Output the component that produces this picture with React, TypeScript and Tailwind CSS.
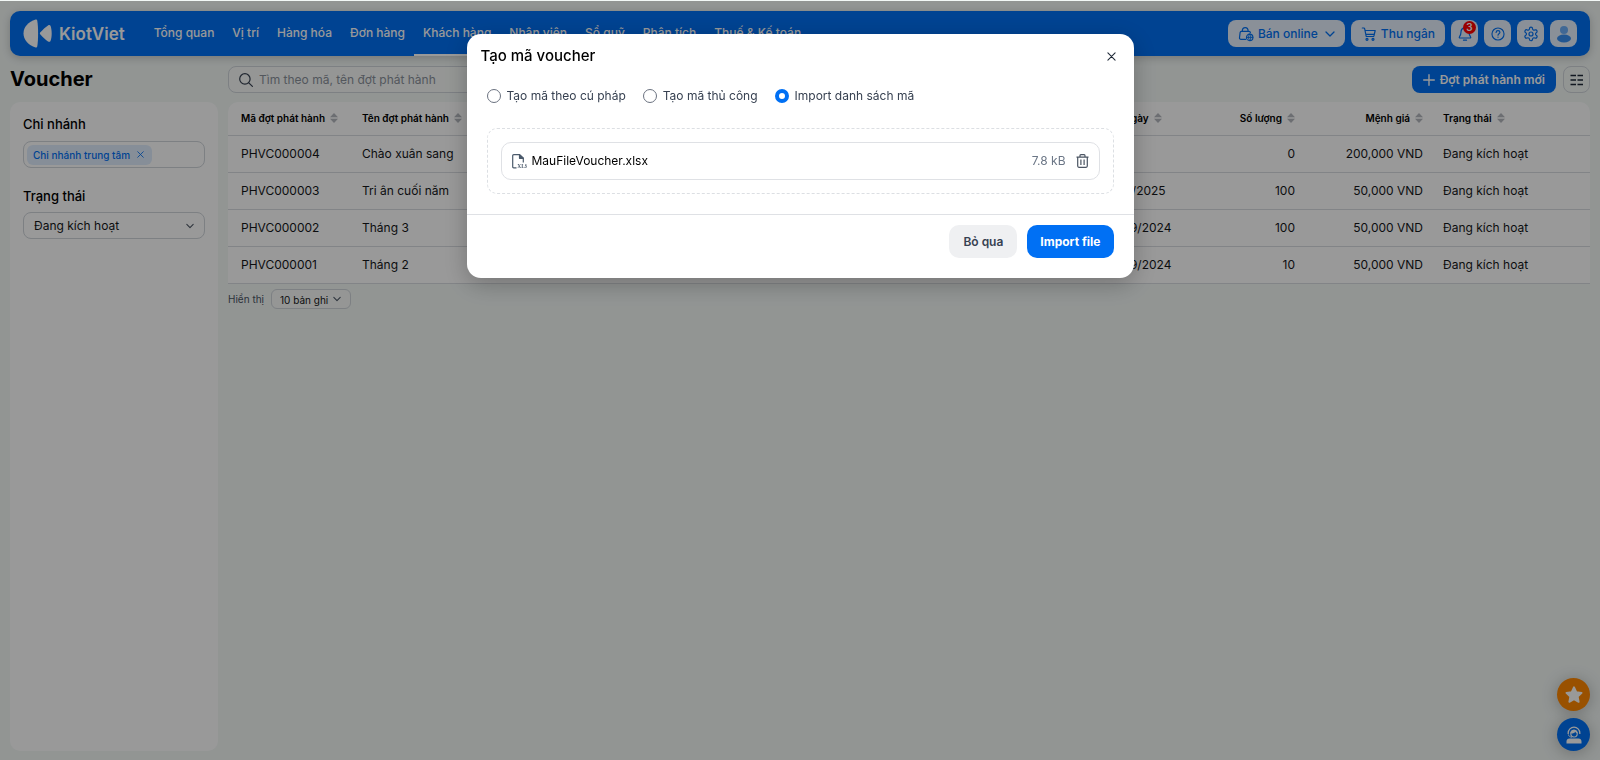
import { useState } from "react";
import type { ReactNode } from "react";

const navItems = [
  "Tổng quan",
  "Vị trí",
  "Hàng hóa",
  "Đơn hàng",
  "Khách hàng",
  "Nhân viên",
  "Sổ quỹ",
  "Phân tích",
  "Thuế & Kế toán",
];

type Voucher = { code: string; name: string; to: string; quantity: string; value: string; status: string };

const vouchers: Voucher[] = [
  { code: "PHVC000004", name: "Chào xuân sang", to: "", quantity: "0", value: "200,000 VND", status: "Đang kích hoạt" },
  { code: "PHVC000003", name: "Tri ân cuối năm", to: "31/12/2025", quantity: "100", value: "50,000 VND", status: "Đang kích hoạt" },
  { code: "PHVC000002", name: "Tháng 3", to: "30/09/2024", quantity: "100", value: "50,000 VND", status: "Đang kích hoạt" },
  { code: "PHVC000001", name: "Tháng 2", to: "30/09/2024", quantity: "10", value: "50,000 VND", status: "Đang kích hoạt" },
];

const modes = ["Tạo mã theo cú pháp", "Tạo mã thủ công", "Import danh sách mã"];

export default function App() {
  const [open, setOpen] = useState(true);

  return (
    <div className="flex min-h-screen flex-col bg-[#f3f8f6] px-2.5 pt-[11px] pb-[9px] font-['Inter',sans-serif] text-xs leading-5 text-[#15171a]">
      <Header />
      <div className="mt-2.5 flex flex-1 gap-2.5">
        <aside className="flex w-52 shrink-0 flex-col">
          <h1 className="h-[27px] text-xl leading-[26px] font-bold text-black">Voucher</h1>
          <Filters />
        </aside>
        <main className="min-w-0 flex-1">
          <Toolbar onCreate={() => setOpen(true)} />
          <VoucherTable />
          <div className="mt-[5px] flex items-center gap-[7px] text-[10px] text-[#4b5563]">
            <label htmlFor="page-size">Hiển thị</label>
            <div className="relative">
              <select id="page-size" className="h-5 w-20 appearance-none rounded-md border border-[#d0d5db] bg-white/40 pl-2 text-[10px] text-[#15171a]">
                <option>10 bản ghi</option>
              </select>
              <Chevron className="pointer-events-none absolute top-1.5 right-2.5 h-2 w-2" />
            </div>
          </div>
        </main>
      </div>
      <div className="fixed right-2.5 bottom-[9px] flex flex-col gap-[7px]">
        <button aria-label="Đánh giá" className="flex h-[33px] w-[33px] items-center justify-center rounded-full bg-[#ff8800] shadow-[0_2px_16px_rgba(0,0,0,0.25)]">
          <svg viewBox="0 0 18 18" className="h-[18px] w-[18px]" fill="#fff" stroke="#fff" strokeWidth="1.8" strokeLinejoin="round">
            <path d="M9 1.2l2.3 4.9 5.3.7-3.9 3.7 1 5.4L9 13.2l-4.7 2.700 1-5.400L1.400 6.800l5.300-.7z" />
          </svg>
        </button>
        <button aria-label="Hỗ trợ" className="flex h-[33px] w-[33px] items-center justify-center rounded-full bg-[#0070f4] shadow-[0_2px_16px_rgba(0,0,0,0.25)]">
          <svg viewBox="0 0 18 18" className="h-[18px] w-[18px]" fill="none" stroke="#fff">
            <path d="M3.2 8V7a5.8 5.8 0 0 1 11.6 0v1" strokeWidth="1.3" />
            <path d="M5.2 6.2a4 3.8 0 0 1 7.6 0v1.6a3.8 3.8 0 0 1-7.6 0z" fill="#fff" stroke="none" />
            <path d="M6.3 7.600c2 0 3.400-.7 4.200-1.800.3 1 .7 1.400 1.300 1.600-.1 2-1.300 3.200-2.800 3.200S6.400 9.600 6.300 7.600z" fill="#0070f4" stroke="none" />
            <path d="M3.400 8.500c.3 1.700 1.600 2.500 3.600 2.700" strokeWidth="1" />
            <path d="M1.500 17.500v-2c0-1.800 1.200-2.900 3-2.900h9c1.800 0 3 1.100 3 2.900v2z" fill="#fff" stroke="none" />
          </svg>
        </button>
      </div>
      {open && <ImportModal onClose={() => setOpen(false)} />}
    </div>
  );
}

function Header() {
  return (
    <header className="flex h-[45px] items-stretch rounded-[10px] bg-[#0070f4] px-[13px] text-white shadow-[0_2px_8px_rgba(0,0,0,0.2)]">
      <a href="#" className="flex items-center gap-[7px] text-[17px] font-semibold">
        <svg viewBox="0 0 29 29" className="h-[29px] w-[29px]" fill="#fff">
          <path d="M12.600.6C5.300 3 .5 8 .5 14.500S5.300 26 12.600 28.400c1 .3 1.500-.1 1.700-1.100.5-2.800.8-7.700.8-12.800s-.3-10-.8-12.800C14.100.7 13.600.3 12.600.6z" />
          <path d="M17.400 13.300C19.800 10.500 22.300 8.300 25 6.400c1.200-.8 2.100-.6 2.600.7.7 2 1.100 4.600 1.100 7.300s-.4 5.300-1.100 7.300c-.5 1.300-1.400 1.500-2.600.7-2.700-1.900-5.200-4.100-7.600-6.900-.7-.8-.7-1.400 0-2.200z" />
        </svg>
        KiotViet
      </a>
      <nav className="ml-5 flex">
        {navItems.map((item) => (
          <a
            key={item}
            href="#"
            className={`flex items-center border-b-2 px-[9px] font-medium whitespace-nowrap ${item === "Khách hàng" ? "border-white" : "border-transparent"}`}
          >
            {item}
          </a>
        ))}
      </nav>
      <div className="ml-auto flex items-center gap-1.5 text-[#0070f4]">
        <button className="flex h-[27px] items-center gap-1 rounded-lg bg-[#e6f1fe] px-2.5 font-medium">
          <svg viewBox="0 0 16 16" className="h-4 w-4" fill="none" stroke="currentColor" strokeWidth="1.2" strokeLinecap="round" strokeLinejoin="round">
            <path d="M7.500 13.400H3c-1 0-1.600-.7-1.500-1.600l.6-5.200c.1-.7.6-1.200 1.300-1.200h7.700c.7 0 1.200.5 1.300 1.200" />
            <path d="M4.300 5.200C4.300 3 5.400 1.700 7.200 1.700s2.900 1.300 2.900 3.500" />
            <circle cx="11.7" cy="11.4" r="3.2" />
            <path d="M8.500 11.400h6.400M11.700 8.200c-1.600 2-1.600 4.400 0 6.400 1.600-2 1.600-4.400 0-6.400z" strokeWidth=".9" />
          </svg>
          Bán online
          <Chevron className="ml-[3px] h-2.5 w-2.5" />
        </button>
        <button className="flex h-[27px] items-center gap-1 rounded-lg bg-[#e6f1fe] px-2.5 font-medium">
          <svg viewBox="0 0 16 16" className="h-4 w-4" fill="none" stroke="currentColor" strokeWidth="1.2" strokeLinecap="round" strokeLinejoin="round">
            <path d="M1.300 2h1.500c.5 0 .8.3.9.8l1.500 7.700h7.600M4.200 4.500h10l-1.200 5M4.700 8.300h8.600" />
            <circle cx="6" cy="13.3" r="1" />
            <circle cx="12" cy="13.3" r="1" />
          </svg>
          Thu ngân
        </button>
        <HeaderButton label="Thông báo">
          <svg viewBox="0 0 16 16" className="h-4 w-4" fill="none" stroke="currentColor" strokeWidth="1.2" strokeLinecap="round" strokeLinejoin="round">
            <path d="M8 1.800c-2.500 0-4 1.900-4 4.200 0 2.800-.8 3.900-1.600 5-.3.500-.1 1 .5 1h10.200c.6 0 .8-.5.500-1-.8-1.100-1.600-2.200-1.600-5 0-2.300-1.500-4.200-4-4.200z" />
            <path d="M6.500 14.200h3" />
          </svg>
          <span className="absolute top-px right-0.5 h-[13px] w-[13px] rounded-full bg-[#ff0000] text-center text-[10px] leading-[13px] font-semibold text-white">3</span>
        </HeaderButton>
        <HeaderButton label="Trợ giúp">
          <svg viewBox="0 0 16 16" className="h-3.5 w-3.5" fill="none" stroke="currentColor" strokeWidth="1.3" strokeLinecap="round" strokeLinejoin="round">
            <circle cx="8" cy="8" r="6.9" />
            <path d="M5.800 6.200c.1-1.300 1-2 2.200-2s2.200.8 2.200 1.900c0 1.600-2.200 1.600-2.200 3.200M8 11.500v.1" />
          </svg>
        </HeaderButton>
        <HeaderButton label="Thiết lập">
          <svg viewBox="0 0 24 24" className="h-4 w-4" fill="none" stroke="currentColor" strokeWidth="1.8" strokeLinecap="round" strokeLinejoin="round">
            <path d="M9.700 4.100a2.300 2.300 0 0 1 4.600 0 2.300 2.300 0 0 0 3.300 1.900 2.300 2.300 0 0 1 2.300 4 2.300 2.300 0 0 0 0 3.900 2.300 2.300 0 0 1-2.300 4 2.300 2.300 0 0 0-3.300 1.900 2.300 2.300 0 0 1-4.600 0 2.300 2.300 0 0 0-3.300-1.900 2.300 2.300 0 0 1-2.300-4 2.300 2.300 0 0 0 0-3.900 2.300 2.300 0 0 1 2.300-4 2.300 2.300 0 0 0 3.300-1.900" />
            <circle cx="12" cy="12" r="3" />
          </svg>
        </HeaderButton>
        <HeaderButton label="Tài khoản">
          <svg viewBox="0 0 16 18" className="h-[18px] w-4">
            <circle cx="8" cy="5" r="4" fill="#6dadf8" />
            <ellipse cx="8" cy="13.5" rx="7" ry="4" fill="#3a8ff2" />
          </svg>
        </HeaderButton>
      </div>
    </header>
  );
}

function HeaderButton({ label, children }: { label: string; children: ReactNode }) {
  return (
    <button aria-label={label} className="relative flex h-[27px] w-[27px] items-center justify-center rounded-lg bg-[#e6f1fe]">
      {children}
    </button>
  );
}

function Filters() {
  return (
    <div className="mt-[9px] flex-1 rounded-[10px] bg-white px-[13px] pt-3">
      <label htmlFor="branch" className="block text-[13px] font-medium text-black">Chi nhánh</label>
      <div className="mt-[7px] flex h-[27px] items-center rounded-lg border border-[#d0d5db] px-[3px]">
        <span className="flex h-5 shrink-0 items-center gap-1 rounded-md bg-[#e0edfe] px-1.5 text-[10px] font-medium text-[#0070f4]">
          Chi nhánh trung tâm
          <button aria-label="Bỏ Chi nhánh trung tâm" className="flex h-3 w-3 items-center justify-center">
            <Cross className="h-[7px] w-[7px]" />
          </button>
        </span>
        <input id="branch" type="text" className="w-full min-w-0 outline-none" />
      </div>
      <label htmlFor="status" className="mt-[18px] block text-[13px] font-medium text-black">Trạng thái</label>
      <div className="relative mt-1.5">
        <select id="status" className="h-[27px] w-full appearance-none rounded-lg border border-[#d0d5db] pl-2.5 text-xs">
          <option>Đang kích hoạt</option>
        </select>
        <Chevron className="pointer-events-none absolute top-2.5 right-[11px] h-2 w-2 text-[#4b5563]" />
      </div>
    </div>
  );
}

function Toolbar({ onCreate }: { onCreate: () => void }) {
  return (
    <div className="flex h-[27px] items-center gap-[7px]">
      <div className="flex h-full w-[420px] items-center gap-1.5 rounded-lg border border-[#d0d5db] bg-white/40 pl-2.5">
        <svg viewBox="0 0 14 14" className="h-3.5 w-3.5 shrink-0" fill="none" stroke="#374151" strokeWidth="1.2" strokeLinecap="round">
          <circle cx="5.9" cy="5.9" r="5.2" />
          <path d="M9.8 9.8l3.6 3.6" />
        </svg>
        <input aria-label="Tìm kiếm" type="text" placeholder="Tìm theo mã, tên đợt phát hành" className="w-full outline-none placeholder:text-[#8b919b]" />
      </div>
      <button onClick={onCreate} className="ml-auto flex h-full items-center gap-[5px] rounded-lg bg-[#0070f4] px-[11px] font-semibold whitespace-nowrap text-white">
        <svg viewBox="0 0 12 12" className="h-3 w-3" stroke="currentColor" strokeWidth="1.4" strokeLinecap="round">
          <path d="M6 .7v10.600M.7 6h10.600" />
        </svg>
        Đợt phát hành mới
      </button>
      <button aria-label="Hiển thị cột" className="flex h-full w-[27px] items-center justify-center rounded-lg border border-[#d0d5db]">
        <svg viewBox="0 0 13 12" className="h-3 w-[13px]" stroke="#1f2937" strokeWidth="1.3">
          <path d="M.5 1.500H6M7.500 1.500H13M.5 6H6M7.500 6H13M.5 10.500H6M7.500 10.500H13" />
        </svg>
      </button>
    </div>
  );
}

function VoucherTable() {
  return (
    <table className="mt-[9px] w-full table-fixed overflow-hidden rounded-t-[10px] bg-white text-left">
      <colgroup>
        <col className="w-[124px]" />
        <col />
        <col className="w-[109px]" />
        <col className="w-[103px]" />
        <col className="w-[128px]" />
        <col className="w-[157px]" />
      </colgroup>
      <thead>
        <tr className="h-[33px] border-b border-[#d9dce1] text-[10px] text-black">
          <Th className="pl-[13px]">Mã đợt phát hành</Th>
          <Th className="pl-2.5">Tên đợt phát hành</Th>
          <Th className="pl-2.5">Đến ngày</Th>
          <Th className="pr-2.5" right>Số lượng</Th>
          <Th className="pr-2.5" right>Mệnh giá</Th>
          <Th className="pl-2.5">Trạng thái</Th>
        </tr>
      </thead>
      <tbody>
        {vouchers.map((v) => (
          <tr key={v.code} className="h-[37px] border-b border-[#d9dce1]">
            <td className="pl-[13px]">{v.code}</td>
            <td className="pl-2.5">{v.name}</td>
            <td className="pl-2.5">{v.to}</td>
            <td className="pr-2.5 text-right">{v.quantity}</td>
            <td className="pr-2.5 text-right">{v.value}</td>
            <td className="pl-2.5">{v.status}</td>
          </tr>
        ))}
      </tbody>
    </table>
  );
}

function Th({ children, className, right }: { children: ReactNode; className: string; right?: boolean }) {
  return (
    <th className={`font-semibold whitespace-nowrap ${className}`}>
      <span className={`flex items-center gap-[5px] ${right ? "justify-end" : ""}`}>
        {children}
        <svg viewBox="0 0 8 10" className="h-2.5 w-2 shrink-0" fill="#b4b8be">
          <path d="M4 0l4 4.300H0zM4 10L0 5.700h8z" />
        </svg>
      </span>
    </th>
  );
}

function ImportModal({ onClose }: { onClose: () => void }) {
  const [mode, setMode] = useState(modes[2]);

  return (
    <div className="fixed inset-x-0 top-px bottom-0 flex items-start justify-center bg-black/40 pt-[33px]">
      <div role="dialog" aria-label="Tạo mã voucher" className="w-full max-w-[667px] rounded-[14px] bg-white shadow-[0_6px_24px_rgba(0,0,0,0.25)]">
        <div className="flex items-center justify-between px-3.5 pt-2.5">
          <h2 className="text-[15px] leading-6 font-medium text-black">Tạo mã voucher</h2>
          <button aria-label="Đóng" onClick={onClose} className="flex h-4 w-4 items-center justify-center text-[#1f2937]">
            <Cross className="h-[9px] w-[9px]" />
          </button>
        </div>
        <div className="px-5 pt-[18px] pb-5">
          <div className="flex gap-[17px] text-[#374151]">
            {modes.map((m) => (
              <label key={m} className="flex items-center gap-1.5">
                <input
                  type="radio"
                  name="mode"
                  checked={mode === m}
                  onChange={() => setMode(m)}
                  className="h-3.5 w-3.5 appearance-none rounded-full border border-[#6b7280] bg-white checked:border-4 checked:border-[#0070f4]"
                />
                {m}
              </label>
            ))}
          </div>
          <div className="mt-[22px] rounded-[10px] border border-dashed border-[#dcdfe3] p-[13px]">
            <div className="flex h-[38px] items-center rounded-[10px] border border-[#dfe1e5] px-2.5">
              <svg viewBox="0 0 15 15" className="h-[15px] w-[15px]" fill="none" stroke="#4b5a6b" strokeWidth="1.2" strokeLinejoin="round">
                <path d="M4.500 13.800H1.700c-.6 0-1-.4-1-1V1.700c0-.6.4-1 1-1h5.800l3.800 3.600v4.200" />
                <path d="M7.500.7v3.600h3.800z" fill="#4b5a6b" />
                <text x="5.200" y="14.300" fontSize="5.5" fontWeight="700" fontFamily="Liberation Serif, serif" fill="#4b5a6b" stroke="none">XLS</text>
              </svg>
              <span className="ml-[5px] text-black">MauFileVoucher.xlsx</span>
              <span className="ml-auto text-[#6b7686]">7.8 kB</span>
              <button aria-label="Xóa tệp" className="ml-2.5 flex items-center">
                <svg viewBox="0 0 13 14" className="h-3.5 w-[13px]" fill="none" stroke="#4b5563" strokeWidth="1.2" strokeLinejoin="round">
                  <path d="M.5 3.200h12M4 3V1.700c0-.6.3-1 .9-1h3.200c.6 0 .9.400.9 1V3M1.700 3.200v8.900c0 .8.400 1.200 1.200 1.200h7.200c.8 0 1.200-.4 1.200-1.200V3.200M4.900 5.500v5.500M8.100 5.500v5.500" />
                </svg>
              </button>
            </div>
          </div>
        </div>
        <div className="flex justify-end gap-2.5 border-t border-[#dfe1e5] px-5 pt-2.5 pb-5">
          <button onClick={onClose} className="h-[33px] rounded-[10px] bg-[#eff0f2] px-3.5 font-semibold text-[#374151]">Bỏ qua</button>
          <button className="h-[33px] rounded-[10px] bg-[#0070f4] px-[13px] font-bold text-white">Import file</button>
        </div>
      </div>
    </div>
  );
}

function Chevron({ className }: { className: string }) {
  return (
    <svg viewBox="0 0 10 10" className={className} fill="none" stroke="currentColor" strokeWidth="1.3" strokeLinecap="round" strokeLinejoin="round">
      <path d="M1 3l4 4 4-4" />
    </svg>
  );
}

function Cross({ className }: { className: string }) {
  return (
    <svg viewBox="0 0 10 10" className={className} stroke="currentColor" strokeWidth="1.2" strokeLinecap="round">
      <path d="M1 1l8 8M9 1L1 9" />
    </svg>
  );
}
